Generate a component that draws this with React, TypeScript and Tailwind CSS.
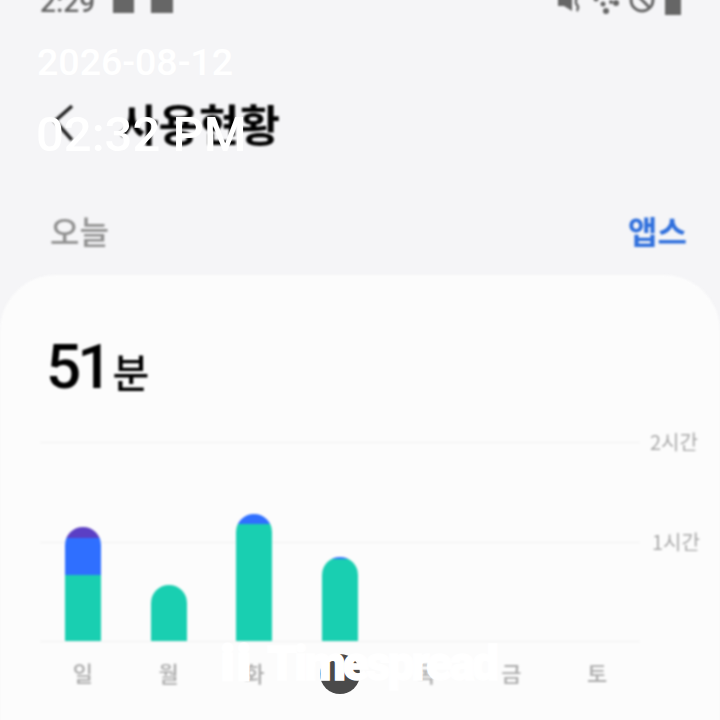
const FONT = { fontFamily: '"Noto Sans CJK KR", Roboto, sans-serif' }

const DAYS = ['일', '월', '화', '수', '목', '금', '토']

// heights are px above the baseline, stacked bottom to top
const BARS: { teal: number; blue: number; purple: number }[] = [
  { teal: 66, blue: 37, purple: 11 },
  { teal: 56, blue: 0, purple: 0 },
  { teal: 117, blue: 10, purple: 0 },
  { teal: 82, blue: 2, purple: 0 },
  { teal: 0, blue: 0, purple: 0 },
  { teal: 0, blue: 0, purple: 0 },
  { teal: 0, blue: 0, purple: 0 },
]

function StatusBar() {
  return (
    <div className="flex h-[24px] -mt-[9px] items-center justify-between pl-[40px] pr-[39px] text-[#666666]">
      <div className="flex items-center">
        <span className="w-[73px] font-['Roboto'] text-[28px] font-medium leading-none">2:29</span>
        <div className="h-[19px] w-[21px] bg-[#666666]" />
        <div className="ml-[17px] h-[19px] w-[22px] bg-[#666666]" />
      </div>
      <div className="flex items-center gap-[8px]">
        <svg width="26" height="24" viewBox="0 0 26 24" fill="#666666">
          <path d="M1 6h6l8-5v19l-8-5H1z" />
          <path d="M18 6c3 3-1 5 2 8s-1 4 1 6" fill="none" stroke="#666666" strokeWidth="2.5" />
        </svg>
        <svg width="30" height="24" viewBox="0 0 30 24" fill="#666666">
          <circle cx="5" cy="8" r="2.5" />
          <circle cx="12" cy="13" r="2.5" />
          <circle cx="15" cy="20" r="3" />
          <circle cx="20" cy="11" r="2" />
          <circle cx="25" cy="12" r="3" />
        </svg>
        <svg width="26" height="24" viewBox="0 0 26 24" fill="none" stroke="#666666" strokeWidth="3">
          <circle cx="13" cy="9" r="11" />
          <path d="M5 1l16 16" />
        </svg>
        <div className="ml-[2px] h-[24px] w-[16px] bg-[#666666]" />
      </div>
    </div>
  )
}

function Header() {
  return (
    <div className="flex h-[70px] mt-[73px] items-center pl-[53px]">
      <svg width="22" height="38" viewBox="0 0 22 38" fill="none" stroke="#222222" strokeWidth="3.5">
        <path d="M19 2L2 17 19 36" />
      </svg>
      <span className="ml-[43px] text-[44px] font-bold leading-none text-black">사용현황</span>
    </div>
  )
}

function Chart() {
  return (
    <div className="relative mt-[35px] pl-[40px]">
      {/* grid lines with the hour labels */}
      <div className="flex h-[100px] items-start">
        <div className="h-px w-[600px] bg-[#f1f1f1]" />
        <span className="-mt-[13px] ml-[10px] text-[20px] leading-[26px] text-[#a8a8a8]">2시간</span>
      </div>
      <div className="flex h-[99px] items-start">
        <div className="h-px w-[600px] bg-[#f1f1f1]" />
        <span className="-mt-[13px] ml-[12px] text-[20px] leading-[26px] text-[#a8a8a8]">1시간</span>
      </div>
      <div className="h-px w-[600px] bg-[#f1f1f1]" />

      {/* bars */}
      <div className="absolute left-[40px] top-0 grid h-[199px] w-[600px] grid-cols-7">
        {BARS.map((bar, i) => (
          <div key={i} className="flex flex-col justify-end items-center">
            <div className="flex w-[36px] flex-col overflow-hidden rounded-t-[18px]">
              <div className="bg-[#5b3fc4]" style={{ height: bar.purple }} />
              <div className="bg-[#2f6fff]" style={{ height: bar.blue }} />
              <div className="bg-[#19cfb1]" style={{ height: bar.teal }} />
            </div>
          </div>
        ))}
      </div>

      <div className="mt-[15px] grid w-[600px] grid-cols-7">
        {DAYS.map((d) => (
          <span key={d} className="text-center text-[22px] font-medium leading-[30px] text-[#aaaaaa]">
            {d}
          </span>
        ))}
      </div>
    </div>
  )
}

export default function App() {
  return (
    <div className="relative h-[720px] w-[720px] overflow-hidden bg-[#f5f5f7]" style={FONT}>
      <div className="blur-[0.8px]">
        <StatusBar />
        <Header />

        <div className="mt-[50px] flex items-center justify-between pl-[50px] pr-[33px] text-[32px] font-medium leading-[44px]">
          <span className="text-[#8f8f8f]">오늘</span>
          <span className="font-bold text-[#2f6fdc]">앱스</span>
        </div>

        <div className="mt-[23px] h-[460px] rounded-t-[56px] bg-[#fcfcfc] pt-[52px]">
          <div className="flex h-[80px] items-baseline pl-[46px] text-black">
            <span className="font-['Roboto'] text-[62px] font-medium leading-[80px] tracking-[-4px]">51</span>
            <span className="ml-[4px] text-[40px] font-medium leading-[80px]">분</span>
          </div>
          <Chart />
        </div>
      </div>

      {/* dark button under the watermark */}
      <div className="absolute left-[320px] top-[654px] h-[40px] w-[40px] rounded-full bg-[#4a4a4a]" />

      {/* date, time and watermark overlays */}
      <div className="absolute left-[37px] top-[40px] font-['Roboto'] text-[37.5px] font-medium leading-[44px] text-white">2026-08-12</div>
      <div className="absolute left-[36px] top-[108px] font-['Roboto'] text-[49px] font-medium leading-[54px] text-white">02:32 PM</div>
      <div className="absolute left-[221px] top-[641px] flex font-['Roboto'] text-[48px] font-black leading-[46px] tracking-[-3px] text-white [-webkit-text-stroke:1.5px_white]">
        <span className="w-[46px] tracking-[3px] [-webkit-text-stroke:3px_white]">ii</span>
        <span>Timespread</span>
      </div>
    </div>
  )
}
